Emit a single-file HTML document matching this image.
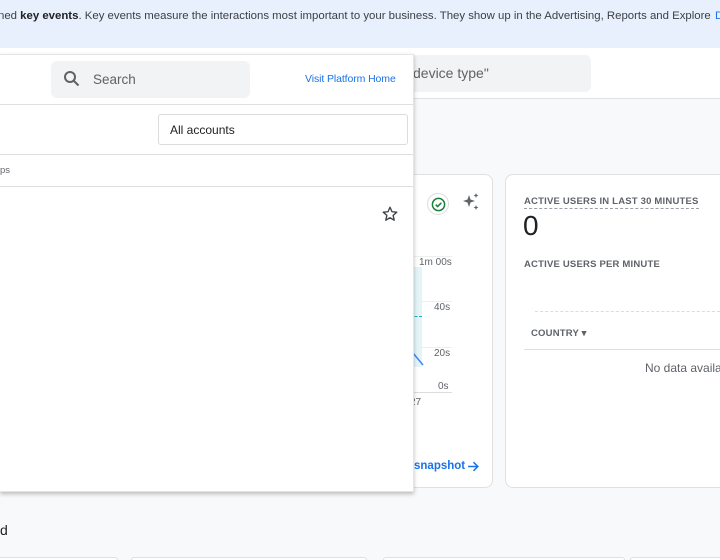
<!DOCTYPE html>
<html><head><style>
*{box-sizing:border-box;margin:0;padding:0}
html,body{width:720px;height:560px;overflow:hidden}
body{background:#f8f9fa;font-family:"Liberation Sans",Arial,sans-serif;position:relative;color:#202124}
.abs{position:absolute}
.banner{left:0;top:0;width:720px;height:48px;background:#e8f0fe;font-size:11.4px;color:#3c4043;padding:10px 0 0 0;white-space:nowrap;overflow:hidden}
.header{left:0;top:48px;width:720px;height:51px;background:#fff;border-bottom:1px solid #e0e0e0}
.card{background:#fff;border:1px solid #e0e0e0;border-radius:8px}
.small{font-size:9.5px;color:#5f6368;font-weight:bold;letter-spacing:.2px;white-space:nowrap}
.lab{font-size:10px;color:#5f6368}
</style></head><body>
<div class="abs banner"><span style="margin-left:-2px">ned <b style="color:#202124">key events</b>. Key events measure the interactions most important to your business. They show up in the Advertising, Reports and Explore</span><span style="position:absolute;left:715px;top:10px;color:#1a73e8">D</span></div>
<div class="abs header"></div>
<div class="abs" style="left:395px;top:55px;width:196px;height:37px;background:#f1f3f4;border-radius:6px;font-size:14px;color:#5f6368;padding:10px 0 0 18px">device type"</div>

<div class="abs card" style="left:0;top:174px;width:493px;height:314px;border-left:none;border-radius:0 8px 8px 0"></div>
<div class="abs card" style="left:505px;top:174px;width:215px;height:314px;border-right:none;border-radius:8px 0 0 8px"></div>

<div class="abs" style="left:427px;top:193px;width:22px;height:22px;border-radius:50%;border:1px solid #dadce0;background:#fff"></div>
<svg class="abs" style="left:431px;top:197px" width="15" height="15" viewBox="0 0 16 16"><circle cx="8" cy="8" r="6.5" fill="none" stroke="#188038" stroke-width="1.6"/><path d="M5 8.2l2 2 4-4" fill="none" stroke="#188038" stroke-width="1.6"/></svg>
<svg class="abs" style="left:461px;top:192px" width="20" height="20" viewBox="0 0 20 20"><path d="M8 3l1.5 4.5L14 9l-4.5 1.5L8 15l-1.5-4.5L2 9l4.5-1.5z" fill="#5f6368"/><path d="M15 1l.7 1.8 1.8.7-1.8.7L15 6l-.7-1.8-1.8-.7 1.8-.7z" fill="#5f6368"/><path d="M15 13l.7 1.8 1.8.7-1.8.7L15 18l-.7-1.8-1.8-.7 1.8-.7z" fill="#5f6368"/></svg>
<div class="abs" style="left:405px;top:267px;width:17px;height:100px;background:#e4f5f7"></div>
<div class="abs" style="left:410px;top:316px;width:12px;border-top:1px dashed #12b5cb"></div>
<svg class="abs" style="left:412px;top:352px" width="12" height="16"><path d="M1 1l10 12" stroke="#4285f4" stroke-width="1.5"/></svg>
<div class="abs" style="left:405px;top:256px;width:47px;border-top:1px solid #eee"></div>
<div class="abs" style="left:405px;top:301px;width:47px;border-top:1px solid #eee"></div>
<div class="abs" style="left:405px;top:347px;width:47px;border-top:1px solid #eee"></div>
<div class="abs" style="left:405px;top:392px;width:47px;border-top:1px solid #ddd"></div>
<div class="abs lab" style="left:419px;top:257px">1m 00s</div>
<div class="abs lab" style="left:434px;top:302px">40s</div>
<div class="abs lab" style="left:434px;top:348px">20s</div>
<div class="abs lab" style="left:438px;top:381px">0s</div>
<div class="abs lab" style="left:410px;top:397px">27</div>
<div class="abs" style="left:414px;top:460px;font-size:11.5px;color:#1a73e8;font-weight:bold">snapshot</div>
<svg class="abs" style="left:467px;top:460px" width="13" height="13" viewBox="0 0 12 12"><path d="M1 6h9M6 2l4 4-4 4" fill="none" stroke="#1a73e8" stroke-width="1.4"/></svg>

<div class="abs small" style="left:524px;top:196px;border-bottom:1px dashed #9aa0a6;padding-bottom:1px">ACTIVE USERS IN LAST 30 MINUTES</div>
<div class="abs" style="left:523px;top:210px;font-size:28px;color:#202124">0</div>
<div class="abs small" style="left:524px;top:259px">ACTIVE USERS PER MINUTE</div>
<div class="abs" style="left:535px;top:311px;width:185px;border-top:1px dashed #dadce0"></div>
<div class="abs small" style="left:531px;top:328px">COUNTRY ▾</div>
<div class="abs" style="left:524px;top:349px;width:196px;border-top:1px solid #e0e0e0"></div>
<div class="abs" style="left:645px;top:361px;font-size:12px;color:#5f6368;white-space:nowrap">No data availa</div>

<div class="abs" style="left:0;top:522px;font-size:14px;color:#202124">d</div>
<div class="abs card" style="left:0;top:557px;width:118px;height:3px;border-bottom:none;border-left:none;border-radius:0 8px 0 0"></div>
<div class="abs card" style="left:131px;top:557px;width:236px;height:3px;border-bottom:none;border-radius:8px 8px 0 0"></div>
<div class="abs card" style="left:383px;top:557px;width:242px;height:3px;border-bottom:none;border-radius:8px 8px 0 0"></div>
<div class="abs card" style="left:630px;top:557px;width:90px;height:3px;border-bottom:none;border-right:none;border-radius:8px 0 0 0"></div>

<div class="abs" style="left:0;top:54px;width:414px;height:438px;background:#fff;box-shadow:0 2px 4px rgba(0,0,0,.25);border:1px solid #e5e5e5;border-left:none"></div>
<div class="abs" style="left:51px;top:61px;width:199px;height:37px;background:#f1f3f4;border-radius:6px"></div>
<svg class="abs" style="left:63px;top:70px" width="18" height="18" viewBox="0 0 18 18"><circle cx="7" cy="7" r="5" fill="none" stroke="#5f6368" stroke-width="2"/><path d="M10.5 10.5l5 5" stroke="#5f6368" stroke-width="2"/></svg>
<div class="abs" style="left:93px;top:72px;font-size:13.5px;color:#5f6368">Search</div>
<div class="abs" style="left:305px;top:73px;font-size:10.5px;color:#1a73e8;white-space:nowrap;letter-spacing:-.1px">Visit Platform Home</div>
<div class="abs" style="left:0;top:104px;width:413px;border-top:1px solid #e0e0e0"></div>
<div class="abs" style="left:158px;top:114px;width:250px;height:31px;border:1px solid #dadce0;border-radius:3px;font-size:12px;color:#202124;padding:8px 0 0 11px">All accounts</div>
<div class="abs" style="left:0;top:154px;width:413px;border-top:1px solid #e0e0e0"></div>
<div class="abs" style="left:0;top:165px;font-size:9.5px;color:#5f6368">ps</div>
<div class="abs" style="left:0;top:186px;width:413px;border-top:1px solid #e0e0e0"></div>
<svg class="abs" style="left:381px;top:205px" width="18" height="18" viewBox="0 0 24 24"><path d="M12 3l2.7 6 6.3.6-4.8 4.3 1.4 6.4L12 17l-5.6 3.3 1.4-6.4L3 9.6 9.3 9z" fill="none" stroke="#3c4043" stroke-width="1.8" stroke-linejoin="round"/></svg>
</body></html>
